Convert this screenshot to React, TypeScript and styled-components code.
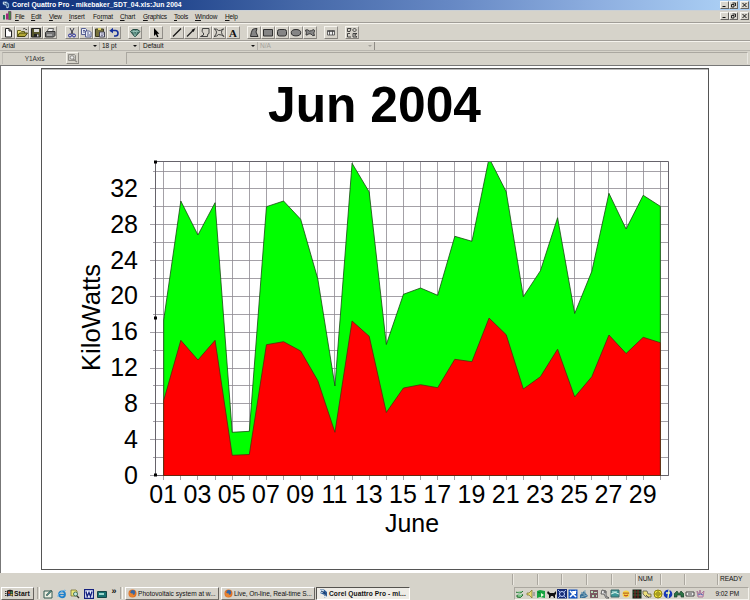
import React from "react";
import styled, { createGlobalStyle } from "styled-components";

const Global = createGlobalStyle`
  * { box-sizing: border-box; }
  html, body { margin: 0; padding: 0; }
  body { width: 750px; height: 600px; overflow: hidden; background: #d6d3ca; }
`;

const Screen = styled.div`
  width: 750px;
  height: 600px;
  display: flex;
  flex-direction: column;
  overflow: hidden;
  background: #d6d3ca;
  color: #111;
  font-family: "Liberation Sans", Arial, sans-serif;
  font-size: 6.5px;
  line-height: 10px;
  white-space: pre;
`;

const TitleBar = styled.header`
  height: 11px;
  flex: none;
  display: flex;
  align-items: center;
  background: linear-gradient(90deg, #10317b 0%, #1d4189 20%, #4568a8 40%, #6688c4 60%, #8eafe0 80%, #a9cdf3 96%);
  border-bottom: 1px solid #cbd0d5;
  padding-left: 2px;
`;

const TitleText = styled.div<{ $spacing: number }>`
  flex: 1;
  margin-left: 2px;
  color: #fff;
  font-weight: bold;
  font-size: 6.8px;
  letter-spacing: ${(p) => p.$spacing}px;
`;

const WindowControls = styled.div`
  display: flex;
  width: 30px;
  height: 9px;
  margin-left: auto;
`;

const ControlButton = styled.div<{ $last?: boolean }>`
  width: 9px;
  height: 8px;
  flex: none;
  margin-left: ${(p) => (p.$last ? "2px" : "0")};
  background: #d8d5cd;
  border: 1px solid;
  border-color: #f8f7f3 #65635f #65635f #f8f7f3;
  display: flex;
  svg { display: block; }
`;

const MenuBar = styled.nav`
  height: 12px;
  flex: none;
  display: flex;
  align-items: center;
  padding-left: 2px;
  border-bottom: 1px solid #a09d97;
`;

const MenuItem = styled.div<{ $w: number; $spacing: number }>`
  width: ${(p) => p.$w}px;
  font-size: 6.5px;
  letter-spacing: ${(p) => p.$spacing}px;
  u { text-underline-offset: 0.5px; text-decoration-thickness: 0.5px; }
`;

const Toolbar = styled.div`
  height: 18px;
  flex: none;
  display: flex;
  align-items: flex-start;
  padding: 2px 0 0 1px;
  border-top: 1px solid #f5f3ed;
  border-bottom: 1px solid #a09d97;
`;

const ToolButton = styled.div<{ $gap?: number }>`
  width: 14px;
  height: 13px;
  margin-left: ${(p) => p.$gap ?? 0}px;
  border: 1px solid;
  border-color: #f6f4ee #918e88 #85827c #f6f4ee;
  svg { display: block; }
`;

const PropertyBar = styled.div`
  height: 10px;
  flex: none;
  display: flex;
  align-items: center;
  border-top: 1px solid #f5f3ed;
  border-bottom: 1px solid #b9b6af;
`;

const Dropdown = styled.div<{ $w: number; $muted?: boolean; $pad?: number; $spacing?: number }>`
  width: ${(p) => p.$w}px;
  height: 8px;
  line-height: 8px;
  padding: 0 2px 0 ${(p) => p.$pad ?? 2}px;
  display: flex;
  align-items: center;
  justify-content: space-between;
  border-right: 1px solid ${(p) => (p.$muted ? "#8e8b85" : "#b5b2ab")};
  color: ${(p) => (p.$muted ? "#a3a19b" : "#111")};
  letter-spacing: ${(p) => p.$spacing ?? 0}px;
`;

const Caret = styled.i<{ $muted?: boolean }>`
  border: 2px solid transparent;
  border-top-color: ${(p) => (p.$muted ? "#a3a19b" : "#111")};
  border-bottom: 0;
`;

const InputBar = styled.div`
  height: 14px;
  flex: none;
  display: flex;
  align-items: center;
  padding: 0 2px;
`;

const NameBox = styled.div`
  width: 64px;
  height: 12px;
  line-height: 12px;
  text-align: center;
  border-top: 1px solid #aaa7a0;
  border-left: 1px solid #c0bdb6;
  color: #333;
  letter-spacing: -0.1px;
`;

const Lookup = styled.div`
  width: 13px;
  height: 12px;
  border: 1px solid;
  border-color: #f6f4ee #918e88 #85827c #f6f4ee;
  svg { display: block; }
`;

const FormulaBox = styled.div`
  margin-left: 47px;
  flex: 1;
  height: 12px;
  border-top: 1px solid #aaa7a0;
  border-left: 1px solid #aaa7a0;
  border-right: 1px solid #e9e7e1;
`;

const Workspace = styled.main`
  height: 508px;
  flex: none;
  border-top: 1px solid #777;
  border-left: 1px solid #777;
  background: #fff;
  padding: 2px 0 0 40px;
`;

const Page = styled.section`
  width: 668px;
  height: 502px;
  border: 1px solid #555;
  box-shadow: inset 0 1px 0 #bbb;
  svg { display: block; }
`;

const StatusBar = styled.div`
  height: 14px;
  flex: none;
  display: flex;
  justify-content: flex-end;
  padding: 1px 0;
`;

const StatusCell = styled.div<{ $w: number }>`
  width: ${(p) => p.$w}px;
  height: 11px;
  line-height: 10px;
  padding-left: 2px;
  border-left: 1px solid #aaa79f;
  box-shadow: inset 1px 0 0 #ece9e2;
  font-size: 6.6px;
  letter-spacing: -0.1px;
`;

const Taskbar = styled.footer`
  flex: 1;
  display: flex;
  align-items: flex-start;
  padding: 0 0 0 1px;
`;

const StartButton = styled.div`
  width: 33px;
  height: 13px;
  display: flex;
  align-items: center;
  padding-left: 3px;
  border: 1px solid;
  border-color: #fff #66635e #66635e #fff;
  font-weight: bold;
  font-size: 6.8px;
  letter-spacing: 0.05px;
`;

const Grip = styled.div<{ $ml: number }>`
  width: 3px;
  height: 12px;
  margin-left: ${(p) => p.$ml}px;
  border-left: 1px solid #aaa79f;
  border-right: 1px solid #f6f4ee;
`;

const QuickLaunch = styled.div`
  display: flex;
  align-items: center;
  height: 13px;
  gap: 3.5px;
  margin-left: 3px;
  width: 77px;
  font-weight: bold;
  svg { flex: none; }
`;

const Chevron = styled.span`
  font-size: 9px;
  line-height: 8px;
  margin-top: -5px;
  margin-left: 1px;
`;

const TaskButton = styled.div<{ $w: number; $ml: number; $active?: boolean; $spacing: number }>`
  width: ${(p) => p.$w}px;
  height: 13px;
  margin-left: ${(p) => p.$ml}px;
  display: flex;
  align-items: center;
  gap: 1px;
  padding-left: 2px;
  border: 1px solid;
  border-color: ${(p) => (p.$active ? "#55534f #fff #fff #55534f" : "#fff #66635e #77746e #fff")};
  background: ${(p) => (p.$active ? "#eeece6" : "transparent")};
  font-weight: ${(p) => (p.$active ? "bold" : "normal")};
  font-size: 6.6px;
  letter-spacing: ${(p) => p.$spacing}px;
  svg { flex: none; }
`;

const Tray = styled.div`
  flex: 1;
  height: 13px;
  margin-left: 104px;
  margin-right: 1px;
  display: flex;
  align-items: center;
  border: 1px solid;
  border-color: #aaa79f #f4f2ec #f4f2ec #aaa79f;
`;

const TrayIcon = styled.div`
  width: 10.6px;
  height: 10px;
  flex: none;
  svg { display: block; }
`;

const Clock = styled.div`
  margin-left: auto;
  padding-right: 9px;
  letter-spacing: -0.1px;
`;

const DARK = "#303030";

const toolArt: Record<string, React.ReactNode> = {
  new: <path d="M3.5 1.5h3.5l2.5 2.5v6h-6zM7 1.5v2.5h2.5" fill="#fff" stroke="#222" />,
  open: <><path d="M1.5 9.5v-6h3l1 1h3v2" fill="#e8df70" stroke="#66641c" /><path d="M1.5 9.5l2-3.5h8l-2.5 3.5z" fill="#b1a734" stroke="#44420c" /><path d="M7 2q2-1.500 3 .8l1-.5" fill="none" stroke="#222" strokeWidth=".8" /></>,
  save: <><path d="M1.500 1.500h9v8.500h-9z" fill="#55552a" stroke="#222" /><path d="M4 2h5v3H4z" fill="#ddd" /><path d="M4 7h5v3H4z" fill="#222" /><path d="M7 7.500h1.500v2H7z" fill="#ddd" /></>,
  print: <><path d="M3 5l1.500-3.500h5L8.500 5z" fill="#eee" stroke="#444" strokeWidth=".8" /><path d="M1.500 5.500l1-1h8.500v4l-1.500 1.500h-8z" fill="#777" stroke="#333" /><path d="M3 8h5" stroke="#ddd" /></>,
  cut: <g fill="none" strokeWidth="1"><path d="M4 1l3 6M8 1l-3 6" stroke="#334" /><circle cx="4" cy="8.500" r="1.500" stroke="#23299a" /><circle cx="8" cy="8.500" r="1.500" stroke="#23299a" /></g>,
  copy: <g fill="#e9ebf3" stroke="#46508a" strokeWidth=".9"><path d="M1.500 1.500h4l1 1v5h-5z" /><path d="M5.500 4h4l1.500 1.500v4.500H5.500z" /><path d="M3 3.500h2M3 5h2M7 6h2M7 8h3" /></g>,
  paste: <><path d="M1.500 2h8v7.500h-8z" fill="#77723d" stroke="#3c3a20" /><path d="M4 1h3v2H4z" fill="#ddd36a" /><path d="M5.500 5h5v5h-5z" fill="#dde" stroke="#445" /><path d="M7 7h3M7 8.500h2" stroke="#446" strokeWidth=".6" /></>,
  undo: <><path d="M4.500 3.500h3q2.500 0 2.500 2.700t-2.500 2.800H6" fill="none" stroke="#152f9b" strokeWidth="1.600" /><path d="M5 .8v5.500L1.300 3.700z" fill="#152f9b" /></>,
  gem: <><path d="M1.500 4.500L4 2.500h4.500L11 4.500l-5 5.500z" fill="#47776c" stroke="#244a42" /><path d="M2 4.500h8.500M4 3l2 6.500L8.500 3M5 3l1.200 2L7.500 3" stroke="#b5dcd1" strokeWidth=".5" fill="none" /></>,
  pointer: <path d="M4 1v8l1.800-1.700 1.400 3 1.300-.6-1.400-2.900h2.300z" fill="#000" />,
  line: <path d="M2 9.500L10 1.500" stroke="#111" strokeWidth="1.200" />,
  arrow: <><path d="M2 9.500L9 2.500" stroke="#222" strokeWidth="1.200" /><path d="M10.500 1L6.500 3l2 2z" fill="#111" /></>,
  poly: <path d="M3.500 1.500h6.500v5q-2 0-1.500 3h-7l3-1.500v-2q-2.500-.5-1-4.500" fill="none" stroke="#333" strokeWidth=".9" />,
  curve: <path d="M1 2q3-.5 4.500 1.500 2 .5 4.500-1.500h1M1 9.500q3 0 4.500-2 3 0 5.500 2M1.500 2q4 2.500 0 7.500M10 2q-3.500 3.500 1 7.500" fill="none" stroke="#333" strokeWidth=".9" />,
  closed: <path d="M4.500 2.500Q6 1.500 9 1.500l-1 3.500 2 4.500H2.500q.5-4 2-7z" fill="#858585" stroke={DARK} />,
  rect: <path d="M1.500 2.500h9v6.500h-9z" fill="#858585" stroke={DARK} />,
  round: <rect x="1.500" y="2.500" width="9" height="6.500" rx="2" fill="#858585" stroke={DARK} />,
  oval: <ellipse cx="6" cy="5.700" rx="4.700" ry="3.200" fill="#858585" stroke={DARK} />,
  blob: <path d="M1.500 3q2-1 4 1 2 0 4-1.500 1 0 1 2-1.500 1 0 4-2 1-3.500-1.500-2-1-4 1H2q1-2-.5-5z" fill="#858585" stroke={DARK} strokeWidth=".9" />,
  box: <path d="M2.500 3.500h7V8h-7zM2.500 4.500h7M4.500 3.500V8M7.500 3.500V8" fill="#eee" stroke="#444" strokeWidth=".8" />,
  tools: <g fill="none" stroke="#333" strokeWidth=".9"><path d="M1.500 1.500H5l-1 3H1.500zM8.500 1l2 2-2 2-2-2zM1.500 6.500v3.500H5M1.500 6.500H4M7 6.500h4L8.500 8l2.500 2H7z" /></g>,
};

const tools: Array<[string, number]> = [
  ["new", 0], ["open", 0], ["save", 0], ["print", 0],
  ["cut", 8], ["copy", 0], ["paste", 0], ["undo", 0],
  ["gem", 7], ["pointer", 7],
  ["line", 7], ["arrow", 0], ["poly", 0], ["curve", 0], ["text", 0],
  ["closed", 7], ["rect", 0], ["round", 0], ["oval", 0], ["blob", 0],
  ["box", 7], ["tools", 7],
];

const ToolIcon = ({ name }: { name: string }) => (
  <svg width="12" height="11" viewBox="0 0 12 11">
    {name === "text"
      ? <text x="6" y="9.500" textAnchor="middle" fontFamily="Liberation Serif" fontWeight="bold" fontSize="11" fill="#111">A</text>
      : toolArt[name]}
  </svg>
);

const Controls = () => (
  <WindowControls>
    <ControlButton><svg width="7" height="6"><path d="M1.500 4.500h3" stroke="#111" /></svg></ControlButton>
    <ControlButton><svg width="7" height="6"><path d="M2.500 1h3v3M1.500 2.500h2.500v2.500H1.500z" stroke="#111" fill="none" strokeWidth=".9" /></svg></ControlButton>
    <ControlButton $last><svg width="7" height="6"><path d="M1.500 1l4 4M5.500 1l-4 4" stroke="#111" /></svg></ControlButton>
  </WindowControls>
);

const menus: Array<[string, number, number]> = [
  ["File", 16, -0.25], ["Edit", 18, -0.2], ["View", 20, -0.35], ["Insert", 24, -0.1], ["Format", 27, -0.1],
  ["Chart", 23, -0.15], ["Graphics", 31, -0.3], ["Tools", 21, -0.25], ["Window", 30, -0.15], ["Help", 20, -0.2],
];

const underlineAt: Record<string, number> = { Format: 2 };

const greenY = [320, 201, 235, 202.7, 432.3, 431.3, 206.7, 201, 219.3, 279, 386, 163.3, 192, 344.5, 294.3, 288, 295.3, 236.3, 241.3, 158, 191.7, 296.7, 270.7, 217.7, 313.5, 271.3, 193.3, 229, 195.3, 206.3];
const redY = [400.5, 340.3, 360, 340.3, 455.3, 454.5, 344.7, 341.7, 351, 380.7, 432.3, 321, 336.3, 412.5, 388, 384.7, 387.7, 359.3, 361.7, 318, 334.7, 389, 376.7, 349.2, 397, 376.7, 335, 353.5, 337.3, 342.7];
const dayX = (i: number) => 163.7 + i * 17.125;
const valueY = (v: number) => 475.5 - v * 8.955;
const crisp = (n: number) => Math.floor(n) + 0.5;
const area = (ys: number[]) =>
  `M${dayX(0)} 475.500 ` + ys.map((y, i) => `L${dayX(i).toFixed(2)} ${y}`).join(" ") + ` L${dayX(29)} 475.500Z`;

const Chart = () => (
  <svg width="666" height="500" viewBox="42 69 666 500" fontFamily="Liberation Sans, Arial, sans-serif" fill="#000">
    <defs><clipPath id="plot"><rect x="155" y="162" width="514" height="314" /></clipPath></defs>
    <text x="268" y="121.500" fontSize="50" fontWeight="bold" textLength="213" lengthAdjust="spacingAndGlyphs">Jun 2004</text>
    <g stroke="#8d8991" strokeWidth="1" strokeOpacity=".8">
      {greenY.map((_, i) => <path key={i} d={`M${crisp(dayX(i))} 162V480`} />)}
      {Array.from({ length: 18 }, (_, i) => {
        const y = crisp(valueY(i * 2));
        return <path key={i} d={`M${i % 2 ? 153 : 150} ${y}H669`} />;
      })}
    </g>
    <path d="M155.500 161.500H668.500V475.500H155.500z" fill="none" stroke="#66636b" />
    <g clipPath="url(#plot)" strokeLinejoin="round">
      <path d={area(greenY)} fill="#00ff00" stroke="#174a12" strokeWidth=".8" />
      <path d={area(redY)} fill="#ff0000" stroke="#5c2610" strokeWidth=".8" />
    </g>
    <path d="M154 160.500h3v3h-3zM154 316.500h3v3h-3zM154 473.500h3v3h-3z" />
    {[0, 4, 8, 12, 16, 20, 24, 28, 32].map((v) => (
      <text key={v} x="138" y={valueY(v) + 8} fontSize="25" textAnchor="end">{v}</text>
    ))}
    {Array.from({ length: 15 }, (_, k) => (
      <text key={k} x={dayX(k * 2) - 0.5} y="502.500" fontSize="25" textAnchor="middle">{String(k * 2 + 1).padStart(2, "0")}</text>
    ))}
    <text x="385" y="532" fontSize="25" textLength="54" lengthAdjust="spacingAndGlyphs">June</text>
    <text transform="translate(99.500 371) rotate(-90)" fontSize="25" textLength="107" lengthAdjust="spacingAndGlyphs">KiloWatts</text>
  </svg>
);

const Firefox = () => (
  <svg width="9" height="9" viewBox="0 0 9 9"><circle cx="4.500" cy="4.500" r="4" fill="#df7125" /><circle cx="4.800" cy="3.500" r="2.400" fill="#3467a7" /><path d="M.8 2.500Q2 5 5 4.500q-1 2 2 1.500Q5 9 2 7.500z" fill="#e88431" /></svg>
);

const Quattro = ({ size = 8, light = false }: { size?: number; light?: boolean }) => (
  <svg width={size} height={size} viewBox="0 0 9 9"><path d="M1 .5h4l3 2.500v4L5.500 8.800V6L1 4z" fill={light ? "#7fa6cf" : "#2b5d98"} /><path d="M1 1h4L4 4 1 3.500zM5 5l2 1v2H5z" fill="#d9e9f2" /><path d="M2 2l2 1 2 1v3" stroke="#163262" fill="none" /></svg>
);

const quick = [
  <><path d="M1 2h8v7H1z" fill="#e9eee0" stroke="#335850" /><path d="M3 6l5-5 1 1-5 5z" fill="#4b8f86" stroke="#444" strokeWidth=".5" /></>,
  <><circle cx="5" cy="5.300" r="3" fill="none" stroke="#1e80cc" strokeWidth="1.800" /><path d="M2 5.500h6" stroke="#1e80cc" strokeWidth="1.300" /><path d="M1 8Q0 6 4 3t5-1" stroke="#69b3e4" fill="none" /></>,
  <><path d="M1 1h5l1 1v5H1z" fill="#ece879" stroke="#777233" strokeWidth=".8" /><circle cx="5.500" cy="5" r="2" fill="#c6e7df" stroke="#47745c" /><path d="M7 7l2 2" stroke="#333" strokeWidth="1.300" /></>,
  <><path d="M.5.5h9v9h-9z" fill="#edf0ff" stroke="#14207e" strokeWidth="1.300" /><path d="M2 2.500l1.200 5L5 3.500l1.500 4L8 2.500" fill="none" stroke="#14207e" strokeWidth="1.300" /></>,
  <><path d="M.5 2.500h9v6h-9z" fill="#187271" stroke="#164646" /><path d="M2 4h5v2H2z" fill="#9ad6cc" /></>,
];

const tray = [
  <><path d="M1 3q4 3 7-1M2 6q4-3 6 0-2 4-6 2z" fill="#7ec98a" stroke="#276e34" /><path d="M2 5h5" stroke="#fff" /></>,
  <><path d="M1 4h2l3-3v8L3 6H1z" fill="#e9dc74" stroke="#77702c" strokeWidth=".7" /><path d="M8 3v4" stroke="#777" /></>,
  <><path d="M1 2l3-1 5 1v7l-5-1-3 1z" fill="#16a341" /><path d="M5 4l3 2-3 2z" fill="#eaffda" /><path d="M2 3l2 1" stroke="#067127" /></>,
  <path d="M1 2l2 2 4 0 2-2v3L8 6v3H7L6 7H4L3 9H2V6L0 4z" fill="#111" />,
  <><path d="M0 0h10v9.500H0z" fill="#152b76" /><circle cx="5" cy="5" r="2.500" fill="none" stroke="#c8daff" /><path d="M1 1l2 2M9 1L7 3M1 9l2-2M9 9L7 7" stroke="#9bb4ea" /></>,
  <><path d="M.5.5h9v9h-9z" fill="#1653c0" /><path d="M2 2l6 6M8 2L2 8" stroke="#fff" strokeWidth="1.600" /><path d="M4 2h4v3H5z" fill="#fff" /></>,
  <><path d="M1 6l4-4 4 5-3 2H1z" fill="#3c7297" /><path d="M2 3l5 4M6 1v4M2 8l6-2" stroke="#7fa9bd" /></>,
  <><path d="M1 1h8v8H1z" fill="#7a5b61" /><path d="M2 2h2v2H2zM5 3h3v1H5zM3 6h2v2H3zM7 6h1v2H7z" fill="#b8e0bc" /></>,
  <><path d="M2 1l4 1v5l3 2H6L4 5H1z" fill="#f0f0f0" stroke="#444" strokeWidth=".8" /><circle cx="5" cy="3" r="1.500" fill="#777" /></>,
  <><path d="M1 1h8v7H1z" fill="#3c9898" stroke="#3b6667" /><path d="M1 5q4-3 8 0M2 3h5" stroke="#d0f1e8" fill="none" /></>,
  <><circle cx="5" cy="5" r="3.500" fill="#f7d448" /><path d="M2 3.500h6v1.300H2z" fill="#bd7322" /><path d="M3 6q2 2 4 0" stroke="#b53222" fill="none" /></>,
  <><path d="M.5.5h9v9h-9z" fill="#172318" /><path d="M1 3h8M1 6h8" stroke="#24703c" /><path d="M3 1v8M6 1v8" stroke="#8b2020" /></>,
  <><path d="M1 2h4l1 3h3v3H4L1 5z" fill="#eadd7b" stroke="#5c5947" strokeWidth=".8" /><path d="M4 6l3 3" stroke="#555" /></>,
  <><circle cx="5" cy="5" r="4" fill="#f5e839" stroke="#8d8216" /><path d="M5 1v8M1 5h8" stroke="#807916" strokeWidth=".8" /><circle cx="5" cy="5" r="2" fill="none" stroke="#807916" strokeWidth=".7" /></>,
  <><circle cx="5" cy="5" r="4.300" fill="#1739b7" /><path d="M6 1L5 9M3 4h4" stroke="#eff8b3" strokeWidth="1.300" /></>,
  <path d="M0 8V5l3-3 2 3 2-3 3 3v3H7V6H3v2z" fill="#2c7246" stroke="#1b412b" strokeWidth=".7" />,
  <path d="M1 3h8v4H1zM3 5h4" fill="#eee" stroke="#444" />,
  <><path d="M2 2l2 3 1-4 1 4 3-3-1 6H3z" fill="#e5bdc7" stroke="#a16a92" strokeWidth=".8" /><path d="M3 6q2-2 5 0" stroke="#506fb7" fill="none" /></>,
];

export default function App() {
  return (
    <>
      <Global />
      <Screen>
        <TitleBar>
          <Quattro size={8} light />
          <TitleText $spacing={0.03}>Corel Quattro Pro - mikebaker_SDT_04.xls:Jun 2004</TitleText>
          <Controls />
        </TitleBar>
        <MenuBar>
          <MenuItem $w={13} $spacing={0}>
            <svg width="10" height="9" viewBox="0 0 10 9"><path d="M1 4h2v4.500H1z" fill="#287f56" /><path d="M4 2.500h2v6H4z" fill="#a3277f" /><path d="M6.500.5h2.500v8H6.500z" fill="#41953d" stroke="#6e1e61" strokeWidth=".6" /></svg>
          </MenuItem>
          {menus.map(([label, w, spacing]) => {
            const at = underlineAt[label] ?? 0;
            return (
              <MenuItem key={label} $w={w} $spacing={spacing}>
                {label.slice(0, at)}<u>{label[at]}</u>{label.slice(at + 1)}
              </MenuItem>
            );
          })}
          <Controls />
        </MenuBar>
        <Toolbar>
          {tools.map(([name, gap]) => (
            <ToolButton key={name} $gap={gap}><ToolIcon name={name} /></ToolButton>
          ))}
        </Toolbar>
        <PropertyBar>
          <Dropdown $w={100}>Arial<Caret /></Dropdown>
          <Dropdown $w={40}>18 pt<Caret /></Dropdown>
          <Dropdown $w={118} $pad={3}>Default<Caret /></Dropdown>
          <Dropdown $w={117} $muted>N/A<Caret $muted /></Dropdown>
        </PropertyBar>
        <InputBar>
          <NameBox>Y1Axis</NameBox>
          <Lookup>
            <svg width="11" height="10" viewBox="0 0 11 10"><path d="M1.500 1.500h6l1 1v5h-7z" fill="#c9c7c1" stroke="#8f8d88" /><circle cx="5" cy="4.500" r="1.800" fill="#eee" stroke="#8f8d88" /><path d="M6 6l4 3" stroke="#8f8d88" strokeWidth="1.300" /></svg>
          </Lookup>
          <FormulaBox />
        </InputBar>
        <Workspace><Page><Chart /></Page></Workspace>
        <StatusBar>
          <StatusCell $w={25} /><StatusCell $w={24} /><StatusCell $w={25} /><StatusCell $w={25} />
          <StatusCell $w={24} /><StatusCell $w={25}>NUM</StatusCell><StatusCell $w={24} /><StatusCell $w={33} />
          <StatusCell $w={33}>READY</StatusCell>
        </StatusBar>
        <Taskbar>
          <StartButton>
            <svg width="9" height="9" viewBox="0 0 9 9"><path d="M2 1.500q3-1.500 6 0v6q-3-1.500-6 0z" fill="#222" /><path d="M3 2.500h2v2H3z" fill="#c54e36" /><path d="M5.500 2.500h2v2h-2z" fill="#47935a" /><path d="M3 5h2v1.500H3z" fill="#4262b5" /><path d="M5.500 5h2v1.500h-2z" fill="#cfb44a" /><path d="M0 2.500h1.500M0 4.500h1.500M0 6.500h1.500" stroke="#333" /></svg>
            Start
          </StartButton>
          <Grip $ml={3} />
          <QuickLaunch>
            {quick.map((art, i) => <svg key={i} width="10" height="10" viewBox="0 0 10 10">{art}</svg>)}
            <Chevron>»</Chevron>
          </QuickLaunch>
          <Grip $ml={0} />
          <TaskButton $w={94} $ml={2} $spacing={0}><Firefox />Photovoltaic system at w...</TaskButton>
          <TaskButton $w={94} $ml={2} $spacing={-0.1}><Firefox />Live, On-line, Real-time S...</TaskButton>
          <TaskButton $w={94} $ml={1} $active $spacing={0.1}><Quattro size={9} />Corel Quattro Pro - mi...</TaskButton>
          <Tray>
            {tray.map((art, i) => <TrayIcon key={i}><svg width="10" height="10" viewBox="0 0 10 10">{art}</svg></TrayIcon>)}
            <Clock>9:02 PM</Clock>
          </Tray>
        </Taskbar>
      </Screen>
    </>
  );
}
